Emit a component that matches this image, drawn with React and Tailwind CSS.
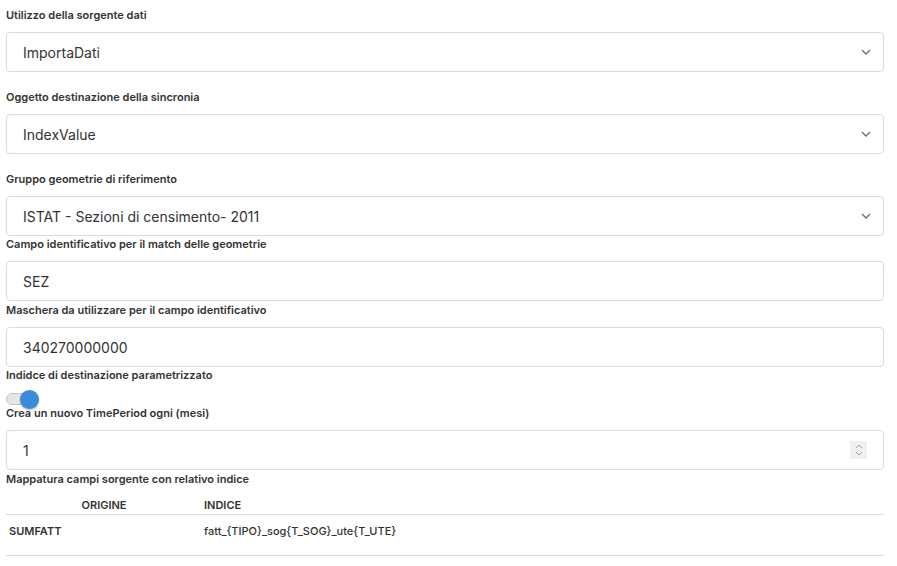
import React from 'react'

const font = { fontFamily: 'Inter, "Noto Sans", sans-serif' }

function Label({ children, className = '' }) {
    return (
        <div className={`h-4 leading-4 text-[11px] font-semibold text-[#333] ${className}`}>{children}</div>
    )
}

function Chevron() {
    return (
        <svg width="10" height="6" viewBox="0 0 10 6" fill="none" stroke="#6b6b6b" strokeWidth="1.3">
            <path d="M1 1l4 4 4-4" />
        </svg>
    )
}

function SelectBox({ value }) {
    return (
        <div className="h-10 w-full flex items-center justify-between pl-4 pr-[12px] border border-[#dcdcdc] rounded-[4px] bg-white">
            <span className="text-[14px] text-[#333]">{value}</span>
            <Chevron />
        </div>
    )
}

function TextBox({ value, number }) {
    return (
        <div className="h-10 w-full flex items-center justify-between pl-4 pr-4 border border-[#dcdcdc] rounded-[4px] bg-white">
            <span className="text-[14px] text-[#333]">{value}</span>
            {number && (
                <div className="w-[17px] h-[18px] bg-[#f0f0f0] flex flex-col items-center justify-center gap-[2px]">
                    <svg width="8" height="5" viewBox="0 0 8 5" fill="none" stroke="#a0a0a0" strokeWidth="1">
                        <path d="M1 4l3-3 3 3" />
                    </svg>
                    <svg width="8" height="5" viewBox="0 0 8 5" fill="none" stroke="#a0a0a0" strokeWidth="1">
                        <path d="M1 1l3 3 3-3" />
                    </svg>
                </div>
            )}
        </div>
    )
}

export default function App() {
    return (
        <div className="w-[897px] h-[566px] bg-white overflow-hidden pl-[6px] pr-[13px] pt-[7px]" style={font}>
            <Label className="mb-[9px]">Utilizzo della sorgente dati</Label>
            <SelectBox value="ImportaDati" />

            <Label className="mt-[17px] mb-[9px]">Oggetto destinazione della sincronia</Label>
            <SelectBox value="IndexValue" />

            <Label className="mt-[17px] mb-[9px]">Gruppo geometrie di riferimento</Label>
            <SelectBox value="ISTAT - Sezioni di censimento- 2011" />

            <Label className="mb-[9px]">Campo identificativo per il match delle geometrie</Label>
            <TextBox value="SEZ" />

            <Label className="mt-[1px] mb-[9px]">Maschera da utilizzare per il campo identificativo</Label>
            <TextBox value="340270000000" />

            <Label>Indidce di destinazione parametrizzato</Label>
            <div className="h-[22px] pt-[10px]">
                <div className="relative w-[26px] h-[12px] rounded-full bg-[#e6e6e6] border border-[#c4c4c4]">
                    <div className="absolute left-[13px] top-[-4px] w-[19px] h-[19px] rounded-full bg-[#3a8bdb] shadow-[0_1px_2px_rgba(0,0,0,0.3)]" />
                </div>
            </div>

            <Label className="mb-[9px]">Crea un nuovo TimePeriod ogni (mesi)</Label>
            <TextBox value="1" number />

            <Label className="mt-[1px]">Mappatura campi sorgente con relativo indice</Label>

            <div className="mt-[9px] text-[11px] text-[#333]">
                <div className="grid grid-cols-[196px_1fr] h-[19px] items-center border-b border-[#dcdcdc] font-semibold">
                    <div className="text-center">ORIGINE</div>
                    <div className="pl-[2px]">INDICE</div>
                </div>
                <div className="grid grid-cols-[196px_1fr] h-[41px] items-start pt-[8px] border-b border-[#dcdcdc]">
                    <div className="pl-[3px] font-semibold">SUMFATT</div>
                    <div className="pl-[2px] font-medium">fatt_{'{TIPO}'}_sog{'{T_SOG}'}_ute{'{T_UTE}'}</div>
                </div>
            </div>
        </div>
    )
}
